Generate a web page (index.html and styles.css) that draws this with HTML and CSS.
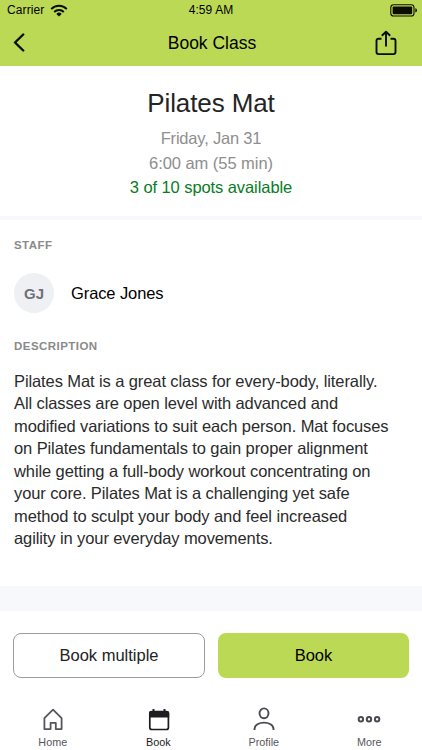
FILE: index.html
```html
<!DOCTYPE html>
<html lang="en">
<head>
<meta charset="utf-8">
<title>Book Class</title>
<link rel="stylesheet" href="styles.css">
</head>
<body>
<div class="app">
  <header class="header">
    <div class="status">
      <div class="carrier"><span>Carrier</span>
        <svg class="wifi" viewBox="0 0 18 13" width="18" height="13"><g fill="none" stroke="#0b0d03" stroke-width="2"><path d="M1.2 5.1a11 11 0 0 1 15.6 0"/><path d="M4.2 8a6.8 6.8 0 0 1 9.6 0"/></g><path d="M6.3 9.9a3.8 3.8 0 0 1 5.4 0L9 12.5z" fill="#0b0d03"/></svg>
      </div>
      <time class="clock">4:59 AM</time>
      <svg class="battery" viewBox="0 0 28 13" width="28" height="13"><rect x=".8" y=".8" width="23.2" height="11.2" rx="2.8" fill="none" stroke="#0b0d03" stroke-width="1.1"/><rect x="2.6" y="2.6" width="19.6" height="7.6" rx="1" fill="#0b0d03"/><path d="M25.3 4.3c2.3.6 2.3 3.6 0 4.2z" fill="#0b0d03"/></svg>
    </div>
    <div class="nav">
      <svg class="back" viewBox="0 0 12 20" width="12" height="20"><path d="M10.2 1.500 2 9.500l8.200 8" fill="none" stroke="#0b0d03" stroke-width="2.4" stroke-linecap="round" stroke-linejoin="round"/></svg>
      <h1>Book Class</h1>
      <svg class="share" viewBox="0 0 22 26" width="22" height="26"><path d="M6.5 8.7H3.5a2 2 0 0 0-2 2v11.400a2 2 0 0 0 2 2h15a2 2 0 0 0 2-2V10.700a2 2 0 0 0-2-2h-3M11 16.500V2M6.800 5.800 11 1.700l4.200 4.100" fill="none" stroke="#0b0d03" stroke-width="1.900" stroke-linejoin="round"/></svg>
    </div>
  </header>
  <section class="summary">
    <h2>Pilates Mat</h2>
    <p class="date">Friday, Jan 31</p>
    <p class="time">6:00 am (55 min)</p>
    <p class="spots">3 of 10 spots available</p>
  </section>
  <main class="details">
    <h3 class="staff-title">STAFF</h3>
    <div class="staff"><span class="avatar">GJ</span><span class="name">Grace Jones</span></div>
    <h3 class="desc-title">DESCRIPTION</h3>
    <p class="description">Pilates Mat is a great class for every-body, literally.<br>All classes are open level with advanced and<br>modified variations to suit each person. Mat focuses<br>on Pilates fundamentals to gain proper alignment<br>while getting a full-body workout concentrating on<br>your core. Pilates Mat is a challenging yet safe<br>method to sculpt your body and feel increased<br>agility in your everyday movements.</p>
  </main>
  <div class="actions">
    <button class="btn outline">Book multiple</button>
    <button class="btn primary">Book</button>
  </div>
  <nav class="tabs">
    <a class="tab"><svg viewBox="0 0 24 24" width="24" height="24"><path d="M3.4 11.2 12 2.7l8.600 8.500v10.900h-5.800v-6.300H9.600v6.300H3.400z" fill="none" stroke="#55565d" stroke-width="1.8" stroke-linejoin="round"/></svg><span>Home</span></a>
    <a class="tab active"><svg viewBox="0 0 24 24" width="24" height="24"><path d="M7.500 2v3M18.500 2v3" stroke="#1c1d21" stroke-width="2"/><rect x="3.800" y="4.700" width="18.600" height="17.800" rx="2" fill="none" stroke="#1c1d21" stroke-width="1.700"/><path d="M3 10.500V5.900q0-2 2-2h16.200q2 0 2 2v4.600z" fill="#1c1d21"/></svg><span>Book</span></a>
    <a class="tab"><svg viewBox="0 0 24 24" width="24" height="24"><g fill="none" stroke="#4a4b52" stroke-width="1.9"><ellipse cx="12" cy="6.300" rx="4.500" ry="4.900"/><path d="M2.500 23v-1c0-8.500 19-8.500 19 0v1"/></g></svg><span>Profile</span></a>
    <a class="tab"><svg viewBox="0 0 24 24" width="24" height="24"><g fill="none" stroke="#4a4b52" stroke-width="2"><circle cx="3.9" cy="12.200" r="2.200"/><circle cx="12" cy="12.200" r="2.200"/><circle cx="20.100" cy="12.200" r="2.200"/></g></svg><span>More</span></a>
  </nav>
</div>
</body>
</html>
```
FILE: styles.css
```css
* { box-sizing: border-box; }
body { margin: 0; background: #fff; font-family: "Liberation Sans", Arial, sans-serif; color: #000; }
h1, h2, h3, p { margin: 0; font-weight: 400; }
svg { display: block; flex: none; }
.app { width: 422px; height: 750px; display: flex; flex-direction: column; overflow: hidden; }
.header { height: 66px; background: #bbd955; flex: none; }
.status { height: 20px; display: grid; grid-template-columns: 1fr auto 1fr; align-items: center; padding: 0 4px 0 7px; font-size: 12px; letter-spacing: .1px; }
.carrier { display: flex; align-items: center; gap: 6px; }
.clock { padding-right: 3px; }
.battery { justify-self: end; }
.nav { height: 46px; display: grid; grid-template-columns: 1fr auto 1fr; align-items: center; padding: 0 25px 0 13px; }
.nav h1 { font-size: 17.5px; line-height: 20px; padding-left: 14px; }
.nav .share { justify-self: end; }
.summary { height: 150px; flex: none; text-align: center; padding-top: 21px; color: #8e8e8e; font-size: 16.5px; letter-spacing: -.05px; line-height: 24.5px; }
.summary h2 { color: #242424; font-size: 26px; line-height: 32px; margin-bottom: 7px; letter-spacing: -.1px; }
.summary .date { letter-spacing: -.2px; }
.summary .spots { color: #087b24; letter-spacing: -.08px; }
.details { height: 370px; flex: none; border-top: 4px solid #f7f8fb; padding: 17px 14px 0; }
.details h3 { font-size: 11.5px; line-height: 16px; font-weight: 700; color: #8a8a8a; letter-spacing: .45px; }
.staff { display: flex; align-items: center; gap: 17px; margin: 20px 0 25px; }
.avatar { width: 40px; height: 40px; border-radius: 50%; background: #eff0f4; color: #707078; font-weight: 700; font-size: 15px; display: flex; align-items: center; justify-content: center; }
.name { font-size: 16.5px; letter-spacing: -.1px; }
.description { margin-top: 16px; font-size: 16.5px; letter-spacing: -.1px; line-height: 22.43px; color: #2b2b2b; white-space: nowrap; }
.actions { flex: none; border-top: 25px solid #f7f8fb; padding: 22px 13px 0; display: grid; grid-template-columns: 192px 191px; gap: 13px; height: 92px; }
.btn { height: 45px; border-radius: 8px; border: 0; font: 16.5px/20px "Liberation Sans", Arial, sans-serif; color: #000; padding: 0 0 2px; }
.outline { background: #fff; border: 1px solid #9c9c9c; color: #222; }
.primary { background: #bbd955; }
.tabs { display: grid; grid-template-columns: repeat(4, 1fr); padding-top: 29px; }
.tab { display: flex; flex-direction: column; align-items: center; font-size: 10.8px; line-height: 14px; color: #55565d; gap: 4px; }
.active { color: #1c1d21; }
```
